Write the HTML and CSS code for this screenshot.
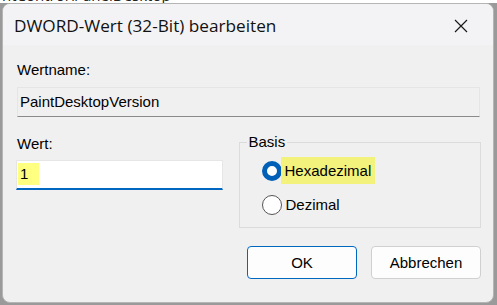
FILE: index.html
```html
<!DOCTYPE html>
<html>
<head>
<meta charset="utf-8">
<link rel="stylesheet" href="styles.css">
</head>
<body>
<div class="behind">ntControl\PanelDesktop</div>
<div class="dialog">
  <div class="titlebar">
    <span class="title">DWORD-Wert (32-Bit) bearbeiten</span>
    <svg class="close" width="14" height="14" viewBox="0 0 14 14"><path d="M1 1 L13 13 M13 1 L1 13" stroke="#1a1a1a" stroke-width="1.2" fill="none"/></svg>
  </div>
  <div class="content">
    <div class="label">Wertname:</div>
    <div class="field name">PaintDesktopVersion</div>
    <div class="row">
      <div class="col-left">
        <div class="label">Wert:</div>
        <div class="field value"><span class="hl">1</span></div>
      </div>
      <fieldset class="group">
        <legend>Basis</legend>
        <div class="radio-row"><span class="radio checked"></span><span class="hl2">Hexadezimal</span></div>
        <div class="radio-row"><span class="radio"></span><span class="rtext">Dezimal</span></div>
      </fieldset>
    </div>
    <div class="buttons">
      <button class="btn primary">OK</button>
      <button class="btn">Abbrechen</button>
    </div>
  </div>
</div>
</body>
</html>
```
FILE: styles.css
```css
html, body {
  margin: 0;
  padding: 0;
}
body {
  width: 497px;
  height: 305px;
  background: #9a9a9a;
  position: relative;
  overflow: hidden;
  font-family: "Liberation Sans", Arial, sans-serif;
  color: #000;
}
.behind {
  position: absolute;
  top: -12px;
  left: 0;
  width: 497px;
  height: 15px;
  background: #fff;
  font-family: "Open Sans", sans-serif;
  font-size: 15px;
  line-height: 15px;
  color: #222;
  padding-left: 2px;
}
.dialog {
  position: relative;
  margin: 3px 0 0 2px;
  width: 490px;
  height: 298px;
  border: 1px solid #b5b5b5;
  border-radius: 8px;
  background: #f0f0f0;
  overflow: hidden;
}
.titlebar {
  height: 41px;
  background: #f3f3f5;
  display: flex;
  align-items: center;
  justify-content: space-between;
  padding: 0 25px 0 11px;
}
.title {
  font-family: "Open Sans", "Noto Sans", sans-serif;
  font-size: 17.2px;
  color: #111;
  letter-spacing: 0;
  margin-top: 1px;
}
.close {
  display: block;
  margin-top: 3px;
}
.content {
  padding: 16px 12px 0 14px;
  font-size: 15px;
}
.label {
  height: 18px;
  line-height: 18px;
}
.field {
  box-sizing: border-box;
  height: 30px;
  line-height: 28px;
  padding-left: 2px;
  border: 1px solid #e5e5e5;
  border-bottom: 1px solid #8a8a8a;
  margin-top: 8px;
}
.field.name {
  background: #f0f0f0;
  width: 463px;
  margin-left: 0;
}
.row {
  display: flex;
  margin-top: 17px;
}
.col-left {
  width: 207px;
  padding-top: 1px;
}
.field.value {
  background: #fff;
  border: 1px solid #e6e6e6;
  border-bottom: 2px solid #0067c0;
  width: 207px;
  margin-left: -1px;
  margin-top: 7px;
  padding-left: 1px;
  padding-top: 2px;
  line-height: 22px;
}
.hl {
  display: inline-block;
  background: #ffff80;
  width: 21px;
  height: 22px;
  padding-left: 2px;
  box-sizing: border-box;
}
.group {
  margin: 1px 0 0 15px;
  width: 243px;
  height: 93px;
  box-sizing: border-box;
  border: 1px solid #dcdcdc;
  padding: 8px 0 0 22px;
}
.group legend {
  padding: 0 2px;
  margin-left: -15px;
  line-height: 14px;
}
.radio-row {
  display: flex;
  align-items: center;
  height: 27px;
}
.radio-row + .radio-row {
  margin-top: 7px;
}
.radio {
  box-sizing: border-box;
  width: 20px;
  height: 20px;
  border-radius: 50%;
  border: 1px solid #555;
  background: #fff;
  margin-right: 3px;
}
.radio.checked {
  border: 5.5px solid #0060b8;
  background: #fff;
}
.hl2 {
  display: inline-block;
  background: #f2f27c;
  height: 27px;
  line-height: 27px;
  padding: 0 4px 0 4px;
  margin-left: -4px;
}
.rtext {
  margin-left: 1px;
}
.buttons {
  display: flex;
  justify-content: flex-end;
  gap: 14px;
  margin-top: 18px;
  padding-right: 0;
}
.btn {
  box-sizing: border-box;
  width: 110px;
  height: 33px;
  border: 1px solid #d0d0d0;
  border-radius: 4px;
  background: #fdfdfd;
  font-family: "Liberation Sans", Arial, sans-serif;
  font-size: 15px;
  color: #000;
}
.btn.primary {
  border: 1px solid #0067c0;
}
```
